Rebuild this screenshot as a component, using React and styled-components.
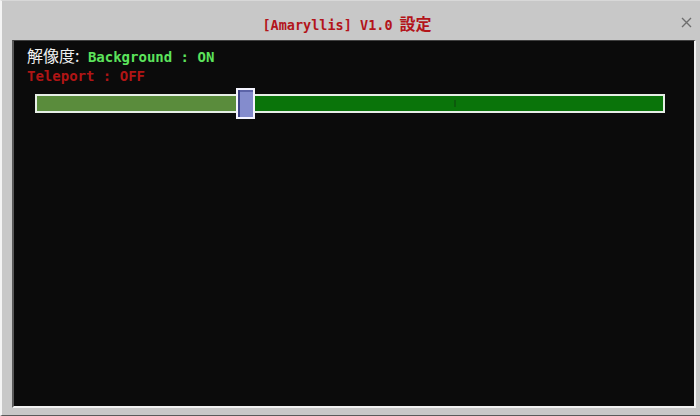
import styled, { createGlobalStyle } from 'styled-components';

const GlobalStyle = createGlobalStyle`
  html, body {
    margin: 0;
    padding: 0;
    background: #c8c8c8;
  }
  body {
    font-family: "DejaVu Sans Mono", "Noto Sans CJK JP", monospace;
  }
`;

const MONO = `"DejaVu Sans Mono", "Liberation Mono", "Noto Sans CJK JP", monospace`;

const Window = styled.div`
  width: 700px;
  height: 416px;
  box-sizing: border-box;
  display: flex;
  flex-direction: column;
  background: #c8c8c8;
  border-left: 2px solid #f4f4f4;
  border-bottom: 1px solid #5a5a5a;
  border-top: 1px solid #d8d8d8;
`;

const TitleBar = styled.div`
  height: 39px;
  display: grid;
  grid-template-columns: 1fr auto 1fr;
  align-items: center;
  padding: 0 8px 0 0;
  box-sizing: border-box;
`;

const Title = styled.div`
  grid-column: 2;
  color: #b3141a;
  font-family: ${MONO};
  font-size: 13.5px;
  font-weight: bold;
  padding-top: 5px;
  display: flex;
  align-items: baseline;
  gap: 7px;
`;

const TitleCjk = styled.span`
  font-family: "Noto Sans CJK JP", sans-serif;
  font-size: 16px;
  font-weight: bold;
`;

const CloseButton = styled.div`
  justify-self: end;
  width: 12px;
  height: 12px;
  display: flex;
  align-items: center;
  justify-content: center;
  margin-top: 4px;
`;

const Content = styled.div`
  flex: 1;
  margin: 0 4px 7px 10px;
  background: #0b0b0b;
  border-top: 1px solid #404040;
  border-left: 2px solid #5a5a5a;
  border-right: 2px solid #f2f2f2;
  border-bottom: 2px solid #f2f2f2;
  padding: 5px 0 0 13px;
  display: flex;
  flex-direction: column;
`;

const Line = styled.div`
  font-family: ${MONO};
  font-size: 14px;
  font-weight: bold;
  line-height: 19px;
  color: ${(p) => p.color};
  white-space: pre;
`;

const Label = styled.span`
  font-family: "Noto Sans CJK JP", sans-serif;
  font-weight: normal;
  font-size: 16px;
  color: #f0f0f0;
`;

const SliderWrap = styled.div`
  margin: 2px 0 0 8px;
  width: 630px;
  height: 31px;
  display: flex;
  align-items: center;
  position: relative;
`;

const Track = styled.div`
  width: 100%;
  height: 19px;
  box-sizing: border-box;
  border: 2px solid #e6eee6;
  display: flex;
`;

const Fill = styled.div`
  background: ${(p) => p.color};
  flex: ${(p) => p.grow};
`;

const Thumb = styled.div`
  position: absolute;
  top: 0;
  width: 19px;
  height: 31px;
  box-sizing: border-box;
  border: 2px solid #f4f4ff;
  background: #848ccd;
  box-shadow: inset 2px 0 0 #3f4488, inset 0 2px 0 #5c63a8;
`;

const Tick = styled.div`
  position: absolute;
  left: 419px;
  top: 12px;
  width: 2px;
  height: 7px;
  background: #0c5a0c;
`;

export default function App() {
  const value = 0.333;
  const thumbLeft = Math.round(value * 630) - 9;
  return (
    <>
      <GlobalStyle />
      <Window>
        <TitleBar>
          <Title>
            <span>[Amaryllis] V1.0</span>
            <TitleCjk>設定</TitleCjk>
          </Title>
          <CloseButton>
            <svg width="11" height="11" viewBox="0 0 11 11">
              <path d="M1 1 L10 10 M10 1 L1 10" stroke="#6e6e6e" strokeWidth="1.4" />
            </svg>
          </CloseButton>
        </TitleBar>
        <Content>
          <Line color="#5ce35c">
            <Label>解像度:</Label> Background : ON
          </Line>
          <Line color="#b01515">Teleport : OFF</Line>
          <SliderWrap>
            <Track>
              <Fill color="#5a8c3c" grow={value} />
              <Fill color="#0a740a" grow={1 - value} />
            </Track>
            <Tick />
            <Thumb style={{ left: thumbLeft }} />
          </SliderWrap>
        </Content>
      </Window>
    </>
  );
}
